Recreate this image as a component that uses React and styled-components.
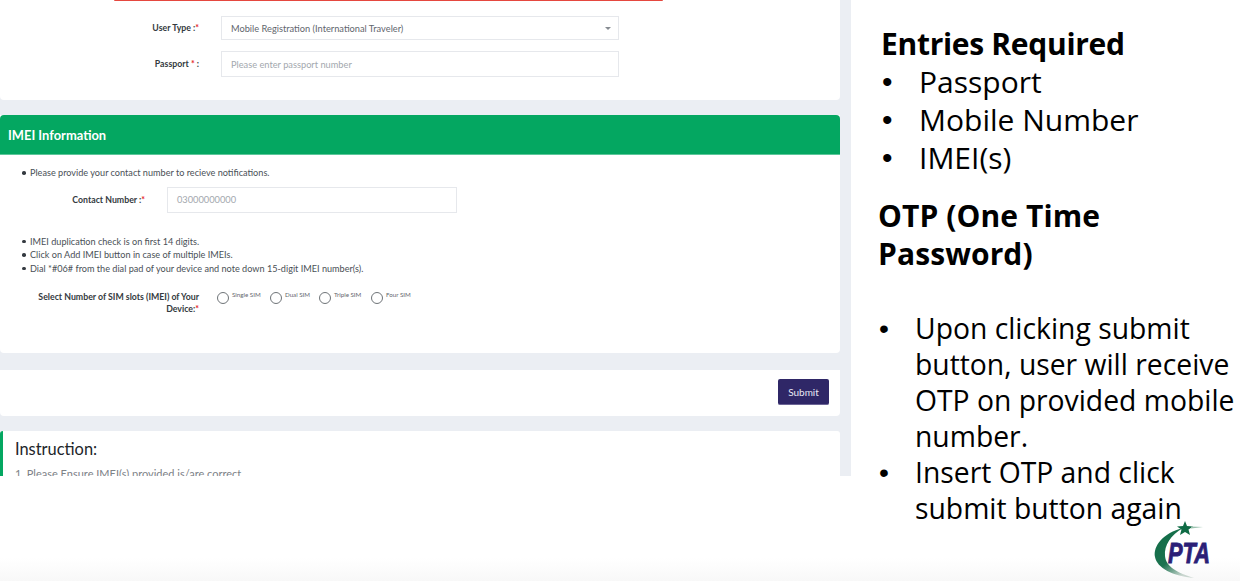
import React from "react";
import styled, { createGlobalStyle } from "styled-components";

const GlobalStyle = createGlobalStyle`
  html, body {
    margin: 0;
    padding: 0;
    background: #ffffff;
  }
  * {
    box-sizing: border-box;
  }
`;

const Slide = styled.div`
  width: 1240px;
  height: 581px;
  display: flex;
  overflow: hidden;
  background: linear-gradient(to bottom, #ffffff 0, #ffffff 558px, #f8f8f8 581px);
`;

const Page = styled.div`
  width: 851px;
  height: 476px;
  flex: none;
  overflow: hidden;
  background: #ebeef3;
  padding-right: 11px;
  font-family: Lato, "Noto Sans", "Liberation Sans", sans-serif;
  color: #495057;
`;

const Card = styled.div`
  background: #ffffff;
  border-radius: 0 0 4px 4px;
  margin-bottom: ${(props) => props.$gap || 15}px;
`;

const TopCard = styled(Card)`
  height: 100px;
  padding: 16px 0 0 0;
  position: relative;
  &::before {
    content: "";
    position: absolute;
    left: 114px;
    top: 0;
    width: 549px;
    height: 1px;
    background: #e5483f;
    border-radius: 0 0 3px 3px;
  }
`;

const FormRow = styled.div`
  display: flex;
  align-items: center;
  margin-bottom: ${(props) => props.$mb || 0}px;
`;

const Label = styled.div`
  width: ${(props) => props.$w}px;
  flex: none;
  text-align: right;
  font-size: 8.75px;
  font-weight: 700;
  line-height: 12px;
  color: #343a40;
  margin-top: ${(props) => props.$mt || 0}px;
  margin-right: ${(props) => props.$mr}px;
`;

const Req = styled.span`
  color: #e5262b;
`;

const Field = styled.div`
  width: ${(props) => props.$w}px;
  height: ${(props) => props.$h}px;
  flex: none;
  border: 1px solid #e6e8ec;
  background: #ffffff;
  display: flex;
  align-items: center;
  justify-content: space-between;
  padding: 0 ${(props) => props.$pr || 9}px 0 ${(props) => props.$pl || 9}px;
  font-size: 9.25px;
  color: ${(props) => (props.$muted ? "#a3a8ae" : "#5f666d")};
`;

const Caret = styled.span`
  width: 0;
  height: 0;
  border-left: 3px solid transparent;
  border-right: 3px solid transparent;
  border-top: 3px solid #868b91;
`;

const GreenHead = styled.div`
  height: 40px;
  background: #04a761;
  border-bottom: 1px solid #5cc79a;
  border-radius: 4px 4px 0 0;
  padding: 0 0 0 8px;
  display: flex;
  align-items: center;
  color: #ffffff;
  font-size: 12.9px;
  font-weight: 700;
`;

const ImeiBody = styled.div`
  height: 198px;
  padding: 11px 0 0 0;
`;

const Notes = styled.ul`
  list-style: none;
  margin: ${(props) => props.$mt || 0}px 0 ${(props) => props.$mb || 0}px 0;
  padding: 0 0 0 21px;
`;

const Note = styled.li`
  position: relative;
  padding-left: 9px;
  font-size: 9.15px;
  line-height: 13.6px;
  color: #4a5056;
  &::before {
    content: "";
    position: absolute;
    left: 1px;
    top: 5px;
    width: 3.5px;
    height: 3.5px;
    border-radius: 50%;
    background: #343a40;
  }
`;

const SimRow = styled.div`
  display: flex;
  align-items: flex-start;
`;

const SimOptions = styled.div`
  display: flex;
`;

const SimOption = styled.div`
  display: flex;
  align-items: flex-start;
  width: ${(props) => props.$w}px;
`;

const Radio = styled.span`
  width: 12px;
  height: 12px;
  flex: none;
  margin-top: 2px;
  border-radius: 50%;
  border: 1px solid #6f7478;
  background: #ffffff;
`;

const SimText = styled.span`
  font-size: 6.2px;
  line-height: 8px;
  margin-left: 3px;
  margin-top: 1px;
  color: #5f666d;
`;

const SubmitCard = styled(Card)`
  height: 46px;
  padding: 9px 11px 0 0;
  display: flex;
  justify-content: flex-end;
  align-items: flex-start;
`;

const SubmitButton = styled.button`
  width: 51px;
  height: 26px;
  border: 0;
  border-bottom: 1px solid #6c6596;
  border-radius: 2px;
  background: #2f2767;
  color: #e8e8f5;
  font-family: inherit;
  font-size: 10px;
  padding: 0;
`;

const InstructionCard = styled.div`
  height: 60px;
  background: #ffffff;
  border-left: 3px solid #04a761;
  border-radius: 3px 3px 0 0;
  padding: 9px 0 0 12px;
`;

const InstructionTitle = styled.div`
  font-size: 16.4px;
  line-height: 18px;
  color: #212529;
`;

const InstructionLine = styled.div`
  font-size: 11px;
  line-height: 14px;
  margin-top: 9px;
  color: #7d8287;
`;

const Side = styled.div`
  flex: 1;
  min-width: 0;
  position: relative;
  padding: 25px 0 0 27px;
  font-family: "Open Sans", "Noto Sans", sans-serif;
  color: #000000;
`;

const SideHeading = styled.div`
  font-size: 30px;
  font-weight: 700;
  line-height: 38px;
  margin-left: ${(props) => props.$ml || 0}px;
  margin-top: ${(props) => props.$mt || 0}px;
  letter-spacing: ${(props) => props.$ls || 0}px;
`;

const EntryList = styled.ul`
  list-style: none;
  margin: 0 0 0 4px;
  padding: 0;
`;

const Bullet = styled.span`
  width: ${(props) => props.$w}px;
  flex: none;
  font-family: "Liberation Sans", sans-serif;
`;

const Entry = styled.li`
  display: flex;
  font-size: 30px;
  line-height: 38px;
`;

const OtpList = styled.ul`
  list-style: none;
  margin: 37px 0 0 1px;
  padding: 0;
`;

const OtpItem = styled.li`
  display: flex;
  font-size: 28.3px;
  line-height: 36px;
  white-space: pre-line;
`;

const LogoMark = styled.svg`
  position: absolute;
  right: 25px;
  bottom: 2px;
  display: block;
`;

function PtaLogo() {
  return (
    <LogoMark width="62" height="60" viewBox="0 0 62 60">
      <defs>
        <linearGradient id="crescentFade" x1="0" y1="0" x2="0.6" y2="1">
          <stop offset="0" stopColor="#0f6b45" />
          <stop offset="0.65" stopColor="#1d7350" />
          <stop offset="1" stopColor="#c9d6cf" />
        </linearGradient>
      </defs>
      <path d="M30 9 C10 14 0 27 2 38 C4 49 20 57 41 59 C25 54 13 48 12 37 C11 26 18 16 30 9 Z" fill="url(#crescentFade)" />
      <path d="M32 2 L34 7 L40 7.5 L35.5 10.5 L37 16 L32 13 L27 16 L28.5 10.5 L24 7.5 L30 7 Z" fill="#0f6b45" />
      <path d="M38 7.5 L50 8 L38 9.5 Z" fill="#9cc2af" />
      <text x="15" y="44" fontFamily="Liberation Sans, sans-serif" fontSize="29" fontWeight="700" fontStyle="italic" fill="#2b1f77" stroke="#2b1f77" strokeWidth="0.9" textLength="42" lengthAdjust="spacingAndGlyphs">PTA</text>
    </LogoMark>
  );
}

export default function App() {
  const sims = [
    { label: "Single SIM", w: 53 },
    { label: "Dual SIM", w: 49 },
    { label: "Triple SIM", w: 52 },
    { label: "Four SIM", w: 50 },
  ];
  return (
    <>
      <GlobalStyle />
      <Slide>
        <Page>
          <TopCard>
            <FormRow $mb={11}>
              <Label $w={199} $mr={22}>User Type :<Req>*</Req></Label>
              <Field $w={398} $h={24} $pr={7}>
                Mobile Registration (International Traveler)
                <Caret />
              </Field>
            </FormRow>
            <FormRow>
              <Label $w={199} $mr={22}>Passport <Req>*</Req> :</Label>
              <Field $w={398} $h={26} $muted>Please enter passport number</Field>
            </FormRow>
          </TopCard>
          <Card $gap={17}>
            <GreenHead>IMEI Information</GreenHead>
            <ImeiBody>
              <Notes $mb={7}>
                <Note>Please provide your contact number to recieve notifications.</Note>
              </Notes>
              <FormRow>
                <Label $w={145} $mr={22}>Contact Number :<Req>*</Req></Label>
                <Field $w={290} $h={26} $muted>03000000000</Field>
              </FormRow>
              <Notes $mt={22} $mb={15}>
                <Note>IMEI duplication check is on first 14 digits.</Note>
                <Note>Click on Add IMEI button in case of multiple IMEIs.</Note>
                <Note>Dial *#06# from the dial pad of your device and note down 15-digit IMEI number(s).</Note>
              </Notes>
              <SimRow>
                <Label $w={199} $mr={18} $mt={1}>
                  Select Number of SIM slots (IMEI) of Your<br />Device:<Req>*</Req>
                </Label>
                <SimOptions>
                  {sims.map((sim) => (
                    <SimOption key={sim.label} $w={sim.w}>
                      <Radio />
                      <SimText>{sim.label}</SimText>
                    </SimOption>
                  ))}
                </SimOptions>
              </SimRow>
            </ImeiBody>
          </Card>
          <SubmitCard>
            <SubmitButton>Submit</SubmitButton>
          </SubmitCard>
          <InstructionCard>
            <InstructionTitle>Instruction:</InstructionTitle>
            <InstructionLine>1. Please Ensure IMEI(s) provided is/are correct</InstructionLine>
          </InstructionCard>
        </Page>
        <Side>
          <SideHeading $ml={3} $ls={-0.3}>Entries Required</SideHeading>
          <EntryList>
            <Entry><Bullet $w={37}>•</Bullet>Passport</Entry>
            <Entry><Bullet $w={37}>•</Bullet>Mobile Number</Entry>
            <Entry><Bullet $w={37}>•</Bullet>IMEI(s)</Entry>
          </EntryList>
          <SideHeading $mt={20} $ls={0.1}>OTP (One Time<br />Password)</SideHeading>
          <OtpList>
            <OtpItem><Bullet $w={36}>•</Bullet>{"Upon clicking submit\nbutton, user will receive\nOTP on provided mobile\nnumber."}</OtpItem>
            <OtpItem><Bullet $w={36}>•</Bullet>{"Insert OTP and click\nsubmit button again"}</OtpItem>
          </OtpList>
          <PtaLogo />
        </Side>
      </Slide>
    </>
  );
}
